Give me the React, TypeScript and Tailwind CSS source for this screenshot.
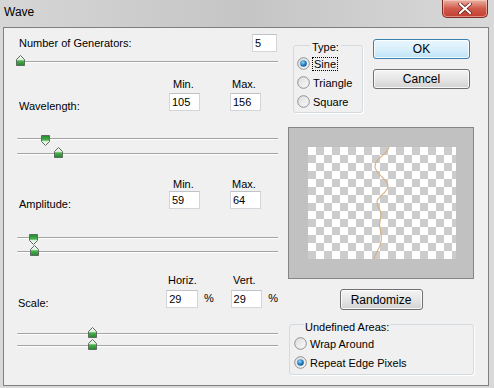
import React from "react"

type SliderThumb = { at: number; down?: boolean }

const sliders: Record<string, SliderThumb> = {
    generators: { at: -1 },
    waveMin: { at: 24, down: true },
    waveMax: { at: 37 },
    ampMin: { at: 12, down: true },
    ampMax: { at: 13 },
    scaleH: { at: 71 },
    scaleV: { at: 71 },
}

function Thumb({ down }: { down?: boolean }) {
    return (
        <svg width="9" height="11" viewBox="0 0 9 11" className={down ? "rotate-180" : ""}>
            <defs>
                <linearGradient id="thumbFill" x1="0" y1="0" x2="0" y2="1">
                    <stop offset="0" stopColor="#ffffff" />
                    <stop offset="0.4" stopColor="#d9efd9" />
                    <stop offset="0.55" stopColor="#49b04a" />
                    <stop offset="1" stopColor="#1f8a2a" />
                </linearGradient>
            </defs>
            <path d="M4.5 0.5 L8.5 4.5 L8.5 10.5 L0.5 10.5 L0.5 4.5 Z" fill="url(#thumbFill)" stroke="#5f6a60" strokeWidth="1" />
        </svg>
    )
}

function Slider({ thumb, className }: { thumb: SliderThumb; className?: string }) {
    return (
        <div className={`relative h-[2px] w-[261px] border-t border-[#a3a3a3] bg-white rounded-l-full ${className ?? ""}`}>
            <div
                className={`absolute flex ${thumb.down ? "top-[-4px]" : "top-[-7px]"}`}
                style={{ left: thumb.at }}
            >
                <Thumb down={thumb.down} />
            </div>
        </div>
    )
}

function Field({ value, className }: { value: string; className?: string }) {
    return (
        <div className={`h-[18px] bg-white border border-[#d2d6db] border-t-[#bfc3c8] pl-[2px] leading-[16px] ${className ?? ""}`}>
            {value}
        </div>
    )
}

function Radio({ id, checked }: { id: string; checked?: boolean }) {
    return (
        <svg width="13" height="13" viewBox="0 0 13 13" className="shrink-0">
            <defs>
                <linearGradient id={`rb-${id}`} x1="0" y1="0" x2="1" y2="1">
                    <stop offset="0" stopColor="#dcdcdc" />
                    <stop offset="1" stopColor="#fbfbfb" />
                </linearGradient>
                <radialGradient id={`rd-${id}`} cx="0.4" cy="0.35" r="0.7">
                    <stop offset="0" stopColor="#9fd6f5" />
                    <stop offset="0.5" stopColor="#2f8ccc" />
                    <stop offset="1" stopColor="#0b4f85" />
                </radialGradient>
            </defs>
            <circle cx="6.5" cy="6.5" r="5.8" fill={`url(#rb-${id})`} stroke="#8f9092" strokeWidth="1" />
            {checked && <circle cx="6.5" cy="6.5" r="3.3" fill={`url(#rd-${id})`} />}
        </svg>
    )
}

function Button({ label, primary, className }: { label: string; primary?: boolean; className?: string }) {
    return (
        <div
            className={`flex items-center justify-center h-[20px] rounded-[3px] border shadow-[inset_0_0_0_1px_rgba(255,255,255,0.8)] text-[12px] ${primary
                ? "border-[#3c7fb1] bg-linear-to-b from-[#eaf6fd] via-[#d9effc] to-[#bfe3f7]"
                : "border-[#707070] bg-linear-to-b from-[#f4f4f4] via-[#e6e6e6] to-[#d2d2d2]"
                } ${className ?? ""}`}
        >
            {label}
        </div>
    )
}

function MinMaxLabels({ a, b, aPad, bPad }: { a: string; b: string; aPad: string; bPad: string }) {
    return (
        <div className="flex h-[14px] leading-[14px]">
            <div className={`w-[213px] ${aPad}`}>{a}</div>
            <div className={bPad}>{b}</div>
        </div>
    )
}

export default function App() {
    return (
        <div className="w-[494px] h-[388px] flex flex-col bg-[#d9d9d9] text-black text-[11px] font-['Liberation_Sans',Arial,sans-serif] overflow-hidden">

            {/* title bar */}
            <div className="h-[27px] flex justify-between bg-linear-to-r from-[#d6d6d6] via-[#c5c5c5] to-[#d9d9d9]">
                <div className="pl-[4px] pt-[5px] text-[12px] leading-[14px]">Wave</div>
                <div className="mr-[6px] w-[46px] h-[18px] rounded-b-[5px] border border-t-0 border-[#7e2c24] bg-linear-to-b from-[#eab1a5] via-[#d05a4b] to-[#c23f2f] shadow-[inset_0_0_0_1px_rgba(255,220,210,0.5)] flex items-center justify-center">
                    <svg width="14" height="11" viewBox="0 0 14 11">
                        <path d="M2 1 L12 10 M12 1 L2 10" stroke="#5a1a14" strokeWidth="3.6" strokeLinecap="round" />
                        <path d="M2 1 L12 10 M12 1 L2 10" stroke="#ffffff" strokeWidth="2.2" strokeLinecap="round" />
                    </svg>
                </div>
            </div>

            <div className="flex-1 pl-[3px] pr-[5px] pb-[2px] flex">
                <div className="flex-1 border border-[#7f7f7f] bg-[#f0f0f0] flex">

                    {/* left column */}
                    <div className="ml-[13px] w-[261px] flex flex-col">
                        <div className="mt-[6px] h-[18px] flex items-center justify-between">
                            <span className="pl-[2px] leading-[14px]">Number of Generators:</span>
                            <Field value="5" className="w-[25px] mr-[1px]" />
                        </div>
                        <Slider thumb={sliders.generators} className="mt-[9px]" />

                        <div className="mt-[14px]">
                            <MinMaxLabels a="Min." b="Max." aPad="pl-[156px]" bPad="pl-[2px]" />
                        </div>
                        <div className="mt-[2px] flex items-start">
                            <span className="w-[152px] pl-[2px] mt-[6px] leading-[14px]">Wavelength:</span>
                            <Field value="105" className="w-[31px]" />
                            <Field value="156" className="ml-[30px] w-[31px]" />
                        </div>
                        <Slider thumb={sliders.waveMin} className="mt-[25px]" />
                        <Slider thumb={sliders.waveMax} className="mt-[13px]" />

                        <div className="mt-[22px]">
                            <MinMaxLabels a="Min." b="Max." aPad="pl-[156px]" bPad="pl-[2px]" />
                        </div>
                        <div className="flex items-start">
                            <span className="w-[152px] pl-[2px] mt-[6px] leading-[14px]">Amplitude:</span>
                            <Field value="59" className="w-[31px]" />
                            <Field value="64" className="ml-[30px] w-[31px]" />
                        </div>
                        <Slider thumb={sliders.ampMin} className="mt-[26px]" />
                        <Slider thumb={sliders.ampMax} className="mt-[12px]" />

                        <div className="mt-[20px] flex h-[14px] leading-[14px]">
                            <div className="w-[216px] pl-[151px]">Horiz.</div>
                            <div>Vert.</div>
                        </div>
                        <div className="mt-[3px] flex items-start">
                            <span className="w-[151px] pl-[1px] mt-[6px] leading-[14px]">Scale:</span>
                            <Field value="29" className="w-[32px]" />
                            <span className="w-[33px] pl-[6px] leading-[16px]">%</span>
                            <Field value="29" className="w-[32px]" />
                            <span className="pl-[6px] leading-[16px]">%</span>
                        </div>
                        <Slider thumb={sliders.scaleH} className="mt-[23px]" />
                        <Slider thumb={sliders.scaleV} className="mt-[10px]" />
                    </div>

                    {/* right column */}
                    <div className="ml-[10px] w-[186px] flex flex-col">
                        <div className="flex items-start">
                            <fieldset className="mt-[10px] ml-[5px] w-[70px] border border-[#d3dbe1] rounded-[3px] shadow-[1px_1px_0_#ffffff]">
                                <legend className="ml-[16px] px-[2px] leading-[14px] translate-y-[2px]">Type:</legend>
                                <div className="pl-[3px] pt-[2px] pb-[1px] flex flex-col">
                                    <div className="h-[19px] flex items-center gap-[2px]">
                                        <Radio id="sine" checked />
                                        <span className="px-[1px] leading-[12px] border border-dotted border-black">Sine</span>
                                    </div>
                                    <div className="h-[19px] flex items-center gap-[3px]">
                                        <Radio id="tri" />
                                        <span className="leading-[14px]">Triangle</span>
                                    </div>
                                    <div className="h-[19px] flex items-center gap-[3px]">
                                        <Radio id="sq" />
                                        <span className="leading-[14px]">Square</span>
                                    </div>
                                </div>
                            </fieldset>
                            <div className="ml-[10px] mt-[11px] flex flex-col gap-[10px]">
                                <Button label="OK" primary className="w-[97px]" />
                                <Button label="Cancel" className="w-[97px]" />
                            </div>
                        </div>

                        <div className="mt-[14px] w-[186px] h-[152px] border border-[#858585] bg-[#c1c1c1] flex items-center justify-center">
                            <div className="w-[148px] h-[112px] bg-[conic-gradient(#cccccc_25%,#ffffff_0_50%,#cccccc_0_75%,#ffffff_0)] bg-[length:16px_16px] ml-[2px]">
                                <svg width="148" height="112" viewBox="0 0 148 112">
                                    <path
                                        d="M81 0 C79 8 66 12 67 20 C68 28 80 32 80 39 C80 46 69 49 69 55 C69 61 74 63 73 69 C72 75 71 77 72 81 C73 87 74 90 73 95 C72 102 67 106 66 112"
                                        fill="none"
                                        stroke="#d6b081"
                                        strokeWidth="1.1"
                                    />
                                </svg>
                            </div>
                        </div>

                        <Button label="Randomize" className="mt-[10px] self-center w-[83px] h-[21px]" />

                        <fieldset className="mt-[7px] ml-[1px] w-[185px] border border-[#d3dbe1] rounded-[3px] shadow-[1px_1px_0_#ffffff]">
                            <legend className="ml-[14px] px-[1px] leading-[14px] translate-y-[3px]">Undefined Areas:</legend>
                            <div className="pl-[4px] pt-[3px] pb-[2px] flex flex-col">
                                <div className="h-[19px] flex items-center gap-[3px]">
                                    <Radio id="wrap" />
                                    <span className="leading-[14px]">Wrap Around</span>
                                </div>
                                <div className="h-[19px] flex items-center gap-[3px]">
                                    <Radio id="repeat" checked />
                                    <span className="leading-[14px]">Repeat Edge Pixels</span>
                                </div>
                            </div>
                        </fieldset>
                    </div>
                </div>
            </div>
        </div>
    )
}
